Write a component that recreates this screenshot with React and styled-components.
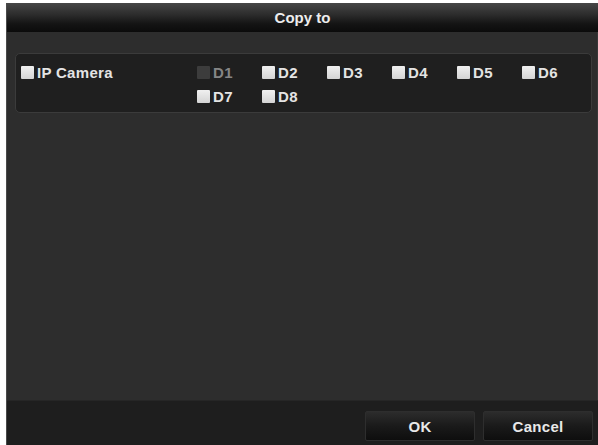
import React from 'react';
import styled, { createGlobalStyle } from 'styled-components';

const GlobalStyle = createGlobalStyle`
  html, body {
    margin: 0;
    padding: 0;
    background: #ffffff;
  }
  body {
    font-family: 'Liberation Sans', Arial, sans-serif;
  }
`;

const Frame = styled.div`
  width: 598px;
  height: 445px;
  padding: 3px 0 0 6px;
  box-sizing: border-box;
  overflow: hidden;
`;

const Dialog = styled.div`
  height: 100%;
  display: flex;
  flex-direction: column;
  background: #2d2d2d;
  border-left: 1px solid #4a4a4a;
`;

const TitleBar = styled.div`
  height: 29px;
  flex: none;
  display: flex;
  align-items: center;
  justify-content: center;
  background: linear-gradient(to bottom, #474747 0%, #2c2c2c 40%, #141414 72%, #0b0b0b 100%);
  color: #ededed;
  font-size: 15px;
  font-weight: bold;
`;

const Body = styled.div`
  flex: 1;
  padding: 21px 5px 0 8px;
  background: #2d2d2d;
  border-right: 1px solid #383838;
`;

const Panel = styled.div`
  height: 60px;
  box-sizing: border-box;
  border: 1px solid #3b3b3b;
  border-radius: 5px;
  background: #1f1f1f;
  padding: 6px 0 0 5px;
  display: grid;
  grid-template-columns: 176px 1fr;
`;

const CameraGrid = styled.div`
  display: grid;
  grid-template-columns: repeat(6, 65px);
  grid-auto-rows: 24px;
`;

const Option = styled.label`
  display: flex;
  align-items: center;
  height: 24px;
  gap: 3px;
  color: ${(p) => (p.disabled ? '#858585' : '#e4e4e4')};
  font-size: 15px;
  font-weight: bold;
  letter-spacing: 0.3px;
`;

const Box = styled.span`
  width: 13px;
  height: 13px;
  border-radius: 1px;
  background: ${(p) =>
    p.disabled ? '#3c3c3c' : 'linear-gradient(to bottom, #f0f0f0, #d4d4d4)'};
`;

const Footer = styled.div`
  height: 45px;
  flex: none;
  display: flex;
  justify-content: flex-end;
  align-items: flex-start;
  gap: 8px;
  padding: 10px 5px 0 0;
  box-sizing: border-box;
  background: #1e1e1e;
  border-top: 1px solid #262626;
`;

const Button = styled.button`
  width: 110px;
  height: 30px;
  border: 1px solid #2e2e2e;
  border-radius: 2px;
  background: linear-gradient(to bottom, #2c2c2c 0%, #1a1a1a 50%, #0e0e0e 100%);
  color: #e8e8e8;
  font-family: 'Liberation Sans', Arial, sans-serif;
  font-size: 15px;
  font-weight: bold;
  letter-spacing: 0.3px;
  padding: 0;
`;

const cameras = [
  { name: 'D1', disabled: true },
  { name: 'D2' },
  { name: 'D3' },
  { name: 'D4' },
  { name: 'D5' },
  { name: 'D6' },
  { name: 'D7' },
  { name: 'D8' }
];

export default function App() {
  return (
    <>
      <GlobalStyle />
      <Frame>
        <Dialog>
          <TitleBar>Copy to</TitleBar>
          <Body>
            <Panel>
              <Option>
                <Box />
                IP Camera
              </Option>
              <CameraGrid>
                {cameras.map((cam) => (
                  <Option key={cam.name} disabled={cam.disabled}>
                    <Box disabled={cam.disabled} />
                    {cam.name}
                  </Option>
                ))}
              </CameraGrid>
            </Panel>
          </Body>
          <Footer>
            <Button>OK</Button>
            <Button>Cancel</Button>
          </Footer>
        </Dialog>
      </Frame>
    </>
  );
}
